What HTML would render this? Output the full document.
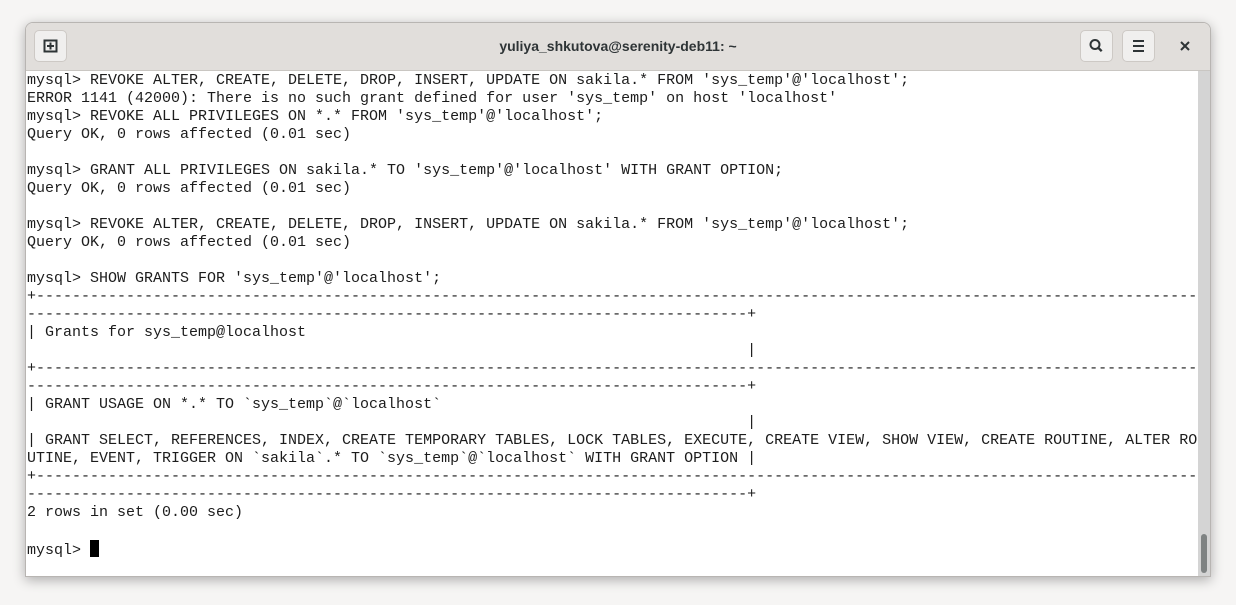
<!DOCTYPE html><html><head><style>
html,body{margin:0;padding:0;width:1236px;height:605px;background:#f6f5f4;overflow:hidden}
.win{position:absolute;left:25px;top:22px;width:1184px;height:553px;background:#fff;border:1px solid #b8b5b2;border-radius:8px 8px 0 0;box-shadow:0 3px 12px rgba(0,0,0,.3);overflow:hidden}
.tb{position:absolute;left:0;top:0;width:1184px;height:47px;background:#e1dedb;border-bottom:1px solid #c9c6c2}
.btn{position:absolute;top:7px;width:33px;height:32px;background:#f0efee;border:1px solid #cdc9c5;border-radius:5px;box-sizing:border-box}
.title{position:absolute;left:0;right:0;top:15px;text-align:center;font:bold 14px "Liberation Sans",sans-serif;color:#2e3436}
pre{position:absolute;left:1px;top:49px;margin:0;font:15px/18px "Liberation Mono",monospace;color:#1c1c1c}
.sb{position:absolute;left:1172px;top:48px;width:12px;height:506px;background:#d4d4d4}
.th{position:absolute;left:3px;top:463px;width:6px;height:39px;background:#7f8383;border-radius:3px}
.cur{display:inline-block;width:9px;height:17px;background:#000;vertical-align:-3px}
</style></head><body>
<div class="win">
<div class="tb">
<div class="btn" style="left:8px"><svg width="31" height="30" viewBox="0 0 31 30"><rect x="9.5" y="9.5" width="12" height="11" fill="none" stroke="#2e3436" stroke-width="2"/><path d="M15.5 11.5v7M12 15h7" stroke="#2e3436" stroke-width="2"/></svg></div>
<div class="title">yuliya_shkutova@serenity-deb11: ~</div>
<div class="btn" style="left:1054px"><svg width="31" height="30" viewBox="0 0 31 30"><circle cx="14" cy="13.5" r="4.5" fill="none" stroke="#2e3436" stroke-width="2"/><path d="M17.2 16.7l3.5 3.5" stroke="#2e3436" stroke-width="2.4"/></svg></div>
<div class="btn" style="left:1096px"><svg width="31" height="30" viewBox="0 0 31 30"><path d="M10 10h11M10 15h11M10 20h11" stroke="#2e3436" stroke-width="2"/></svg></div>
<svg style="position:absolute;left:1152px;top:16px" width="14" height="14" viewBox="0 0 14 14"><path d="M3 3l8 8M11 3l-8 8" stroke="#2e3436" stroke-width="2"/></svg>
</div>
<pre>mysql&gt; REVOKE ALTER, CREATE, DELETE, DROP, INSERT, UPDATE ON sakila.* FROM 'sys_temp'@'localhost';
ERROR 1141 (42000): There is no such grant defined for user 'sys_temp' on host 'localhost'
mysql&gt; REVOKE ALL PRIVILEGES ON *.* FROM 'sys_temp'@'localhost';
Query OK, 0 rows affected (0.01 sec)

mysql&gt; GRANT ALL PRIVILEGES ON sakila.* TO 'sys_temp'@'localhost' WITH GRANT OPTION;
Query OK, 0 rows affected (0.01 sec)

mysql&gt; REVOKE ALTER, CREATE, DELETE, DROP, INSERT, UPDATE ON sakila.* FROM 'sys_temp'@'localhost';
Query OK, 0 rows affected (0.01 sec)

mysql&gt; SHOW GRANTS FOR 'sys_temp'@'localhost';
+---------------------------------------------------------------------------------------------------------------------------------
--------------------------------------------------------------------------------+
| Grants for sys_temp@localhost
                                                                                |
+---------------------------------------------------------------------------------------------------------------------------------
--------------------------------------------------------------------------------+
| GRANT USAGE ON *.* TO `sys_temp`@`localhost`
                                                                                |
| GRANT SELECT, REFERENCES, INDEX, CREATE TEMPORARY TABLES, LOCK TABLES, EXECUTE, CREATE VIEW, SHOW VIEW, CREATE ROUTINE, ALTER RO
UTINE, EVENT, TRIGGER ON `sakila`.* TO `sys_temp`@`localhost` WITH GRANT OPTION |
+---------------------------------------------------------------------------------------------------------------------------------
--------------------------------------------------------------------------------+
2 rows in set (0.00 sec)

mysql&gt; <span class="cur"></span></pre>
<div class="sb"><div class="th"></div></div>
</div>
</body></html>
